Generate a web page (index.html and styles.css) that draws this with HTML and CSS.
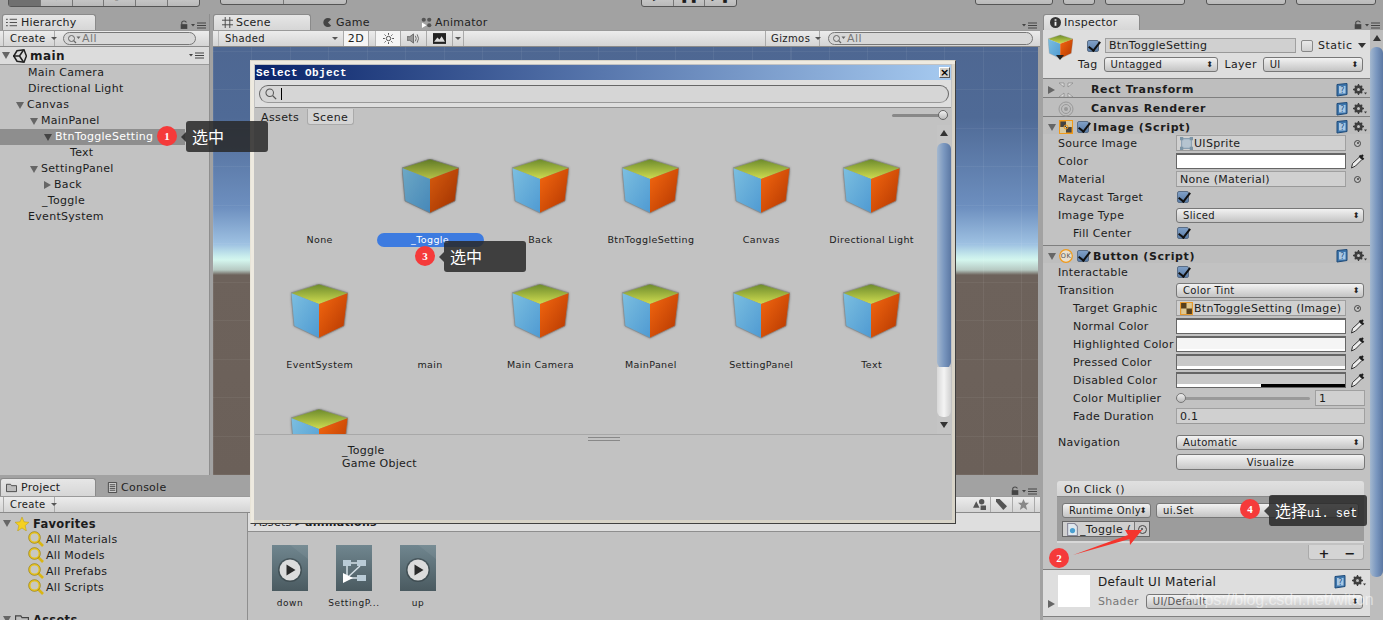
FILE: index.html
```html
<!DOCTYPE html>
<html lang="en">
<head>
<meta charset="utf-8">
<title>Unity Editor</title>
<link rel="stylesheet" href="styles.css">
</head>
<body>
<svg class="sprite" aria-hidden="true">
  <defs>
    <linearGradient id="gTop" x1="0" y1="0" x2="0" y2="1"><stop offset="0" stop-color="#6c8a2c"/><stop offset="1" stop-color="#cfdc50"/></linearGradient>
    <linearGradient id="gLeft" x1="0" y1="0" x2="1" y2="1"><stop offset="0" stop-color="#7cbfe0"/><stop offset="1" stop-color="#4f9ad2"/></linearGradient>
    <linearGradient id="gRight" x1="0" y1="0" x2="1" y2="1"><stop offset="0" stop-color="#f56810"/><stop offset="1" stop-color="#b23600"/></linearGradient>
    <linearGradient id="gClip" x1="0" y1="0" x2="0" y2="1"><stop offset="0" stop-color="#70868f"/><stop offset="1" stop-color="#4a5a60"/></linearGradient>
    <symbol id="cube" viewBox="0 0 57 55">
      <path d="M28 0 57 9 28 20 0 9Z" fill="url(#gTop)"/>
      <path d="M0 9 28 20V54L3 42Z" fill="url(#gLeft)"/>
      <path d="M57 9 28 20V54L53 42Z" fill="url(#gRight)"/>
      <path d="M28 0 57 9 53 42 28 54 3 42 0 9Z" fill="none" stroke="#8a8a8a" stroke-width=".7"/>
    </symbol>
    <symbol id="help" viewBox="0 0 13 14">
      <path d="M1 1.5 11 .5V11.5L1 13Z" fill="#3f77ad" stroke="#1e4a78"/>
      <path d="M3 3H9.5V10.5H3Z" fill="#a9c8e4"/>
      <text x="4.2" y="9.6" font-size="8" font-family="DejaVu Sans" fill="#2a5a8c">?</text>
    </symbol>
    <symbol id="gear" viewBox="0 0 14 12">
      <circle cx="5.5" cy="5.5" r="3.2" fill="none" stroke="#3c3c3c" stroke-width="2.2"/>
      <path d="M5.5 0V11M0 5.5H11M1.8 1.8 9.2 9.2M9.2 1.8 1.8 9.2" stroke="#3c3c3c" stroke-width="1.3"/>
      <circle cx="5.5" cy="5.5" r="1.5" fill="#c2c2c2"/>
      <path d="M11 8.5H14L12.5 10.5Z" fill="#3c3c3c"/>
    </symbol>
    <symbol id="pick" viewBox="0 0 15 15">
      <path d="M2.5 9.5 9.5 3 12 5.5 5.5 12 1.5 14Z" fill="#ededed" stroke="#333"/>
      <path d="M9.5 1.5 13.5 5.5M11 3 13 1" stroke="#1c1c1c" stroke-width="2.2"/>
    </symbol>
    <symbol id="mag" viewBox="0 0 16 16">
      <circle cx="6.5" cy="6.5" r="5" fill="#d8d8c0" fill-opacity=".3" stroke="#e5c120" stroke-width="2"/>
      <path d="M10 10 15 15" stroke="#d9b514" stroke-width="2.6"/>
      <circle cx="6.5" cy="6.5" r="5.9" fill="none" stroke="#7c6a10" stroke-width=".5"/>
    </symbol>
    <symbol id="lock" viewBox="0 0 9 10">
      <path d="M2 5V2.8C2 .4 7 .4 7 2.8" fill="none" stroke="#444" stroke-width="1.2"/>
      <path d="M.8 4.6H8.2V10H.8Z" fill="#444"/>
    </symbol>
    <symbol id="menu" viewBox="0 0 15 7">
      <path d="M0 2H4L2 4.5Z" fill="#444"/>
      <path d="M6 1H15M6 3.5H15M6 6H15" stroke="#444"/>
    </symbol>
    <symbol id="searchico" viewBox="0 0 14 10">
      <circle cx="4.5" cy="4.5" r="3" fill="none" stroke="#666"/>
      <path d="M6.7 6.7 9 9" stroke="#666" stroke-width="1.2"/>
      <path d="M9.5 2.5H13.5L11.5 5Z" fill="#666"/>
    </symbol>
    <symbol id="clip" viewBox="0 0 36 46">
      <rect width="36" height="46" fill="url(#gClip)"/>
      <path d="M36 0V14L18 0Z" fill="#fff" opacity=".06"/>
      <circle cx="18" cy="25" r="12" fill="#2f3a3e" opacity=".55"/>
      <circle cx="18" cy="25" r="10.5" fill="#dcdcdc"/>
      <path d="M14.5 19.5 23.5 25 14.5 30.5Z" fill="#2a2a2a"/>
    </symbol>
    <symbol id="ctrl" viewBox="0 0 36 46">
      <rect width="36" height="46" fill="url(#gClip)"/>
      <path d="M7 15H15V21H7ZM21 15H30V21H21ZM21 30H30V36H21Z" fill="#b9cbd6"/>
      <path d="M15 18H21M11 21V32M24 21 11 33M14 33H21" stroke="#d4dfe6" stroke-width="1.5" fill="none"/>
      <path d="M7 28 17 33 7 38Z" fill="#fff"/>
    </symbol>
    <symbol id="folder" viewBox="0 0 12 10">
      <path d="M.5 1.5H5L6 3H11.5V9.5H.5Z" fill="#bdbdbd" stroke="#444"/>
    </symbol>
  </defs>
</svg>

<div class="editor">
  <div class="topbar">
    <div class="tbgroup tools">
      <span class="tbtn active">⟲</span><span class="tbtn">✥</span><span class="tbtn">⟳</span><span class="tbtn">⤢</span><span class="tbtn">▭</span><span class="tbtn">⊠</span>
    </div>
    <div class="tbgroup pivot"><span class="tbtn">Pivot</span><span class="tbtn">Local</span></div>
    <div class="tbgroup play"><span class="tbtn">▶</span><span class="tbtn">❚❚</span><span class="tbtn">▶❚</span></div>
    <div class="tbgroup collab"><span class="tbtn">Collab</span></div>
    <div class="tbgroup cloud"><span class="tbtn">☁</span></div>
    <div class="tbgroup account"><span class="tbtn">Account</span></div>
    <div class="tbgroup layers"><span class="tbtn">Layers</span></div>
    <div class="tbgroup layout"><span class="tbtn">Layout</span></div>
  </div>

  <div class="workspace">
    <div class="leftside">
      <div class="upper">
        <section class="panel hierarchy">
          <div class="tabrow">
            <div class="tab on">
              <svg class="tabico" viewBox="0 0 12 10"><path d="M0 1.5H2M0 5H2M0 8.5H2M4 1.5H12M4 5H12M4 8.5H12" stroke="#444"/></svg>Hierarchy
            </div>
            <div class="tabtools"><svg class="ico-lock"><use href="#lock"/></svg><svg class="ico-menu"><use href="#menu"/></svg></div>
          </div>
          <div class="bar">
            <span class="bar-btn create">Create <i class="caret"></i></span>
            <div class="search-pill small"><svg class="ico-search"><use href="#searchico"/></svg>All</div>
          </div>
          <div class="scene-root">
            <i class="fold down"></i>
            <svg class="unity" viewBox="0 0 14 14"><path d="M0.8 7 4 1.8 11 .8 13.4 7 11 13.2 4 12.2Z" fill="none" stroke="#222" stroke-width="1.5"/><path d="M0 7H6.5L10.5 1M6.5 7 10.5 13" fill="none" stroke="#222" stroke-width="1.5"/></svg>
            <b>main</b>
            <svg class="ico-menu right"><use href="#menu"/></svg>
          </div>
          <div class="tree">
            <div class="row d0">Main Camera</div>
            <div class="row d0">Directional Light</div>
            <div class="row d0"><i class="fold down"></i>Canvas</div>
            <div class="row d1"><i class="fold down"></i>MainPanel</div>
            <div class="row d2 selected"><i class="fold down"></i>BtnToggleSetting</div>
            <div class="row d3">Text</div>
            <div class="row d1"><i class="fold down"></i>SettingPanel</div>
            <div class="row d2"><i class="fold rt"></i>Back</div>
            <div class="row d1">_Toggle</div>
            <div class="row d0">EventSystem</div>
          </div>
        </section>

        <section class="panel sceneview">
          <div class="tabrow">
            <div class="tab on scene-tab">
              <svg class="tabico" viewBox="0 0 12 12"><path d="M3.5 0V12M8.5 0V12M0 3.5H12M0 8.5H12" stroke="#444"/></svg>Scene
            </div>
            <div class="tab game-tab">
              <svg class="tabico" viewBox="0 0 12 12"><path d="M10 2.5A5 5 0 1 0 10 9.5L6.5 6Z" fill="#444"/></svg>Game
            </div>
            <div class="tab">
              <svg class="tabico" viewBox="0 0 12 12"><circle cx="3" cy="3" r="2.3" fill="#555"/><circle cx="9" cy="3" r="2.3" fill="#555"/><circle cx="9" cy="9" r="2.3" fill="#555"/><path d="M1 6 6 9 1 12Z" fill="#fff"/></svg>Animator
            </div>
            <div class="tabtools"><svg class="ico-menu"><use href="#menu"/></svg></div>
          </div>
          <div class="bar">
            <span class="bar-btn shaded">Shaded <i class="caret"></i></span>
            <span class="bar-btn lit">2D</span>
            <span class="bar-btn lit icon sun"><svg viewBox="0 0 12 12" class="tbico"><circle cx="6" cy="6" r="2.4" fill="none" stroke="#444"/><path d="M6 0V2M6 10V12M0 6H2M10 6H12M1.7 1.7 3 3M9 9 10.3 10.3M1.7 10.3 3 9M9 3 10.3 1.7" stroke="#444"/></svg></span>
            <span class="bar-btn icon"><svg viewBox="0 0 14 12" class="tbico"><path d="M0 4H3L7 1V11L3 8H0Z" fill="#999" stroke="#666"/><path d="M9 3Q11 6 9 9M11 1.5Q14 6 11 10.5" fill="none" stroke="#666"/></svg></span>
            <span class="bar-btn icon pic"><svg viewBox="0 0 12 10" class="tbico"><path d="M0 0H12V10H0Z" fill="#222"/><path d="M1 8 4 4 6 6 8 3 11 8Z" fill="#ddd"/></svg></span>
            <span class="bar-btn dropico"><i class="caret"></i></span>
            <span class="spacer"></span>
            <span class="bar-btn gizmos">Gizmos <i class="caret"></i></span>
            <div class="search-pill wide"><svg class="ico-search"><use href="#searchico"/></svg>All</div>
          </div>
          <div class="viewport"></div>
        </section>
      </div>

      <section class="panel project">
        <div class="tabrow">
          <div class="tab on project-tab"><svg class="tabico"><use href="#folder"/></svg>Project</div>
          <div class="tab console-tab"><svg class="tabico" viewBox="0 0 10 12"><path d="M.5.5H9.5V11.5H.5ZM2 3H8M2 5H8M2 7H8M2 9H8" fill="#ccc" stroke="#444"/></svg>Console</div>
          <div class="tabtools"><svg class="ico-lock"><use href="#lock"/></svg><svg class="ico-menu"><use href="#menu"/></svg></div>
        </div>
        <div class="bar">
          <span class="bar-btn create">Create <i class="caret"></i></span>
          <span class="spacer"></span>
          <span class="bar-btn icon filt"><svg viewBox="0 0 12 10" class="tbico"><path d="M3 2 6 8H0Z M8 0A2.5 2.5 0 1 1 8 5A2.5 2.5 0 1 1 8 0Z M7 6H12V10H7Z" fill="#555"/></svg></span>
          <span class="bar-btn icon filt"><svg viewBox="0 0 12 12" class="tbico"><path d="M0 3V0H4L12 8 8 12Z" fill="#555"/></svg></span>
          <span class="bar-btn icon filt"><svg viewBox="0 0 12 12" class="tbico"><path d="M6 0 7.8 4H12L8.7 7 10 12 6 9.2 2 12 3.3 7 0 4H4.2Z" fill="#888"/></svg></span>
          <span class="bar-tail"></span>
        </div>
        <div class="project-body">
          <div class="proj-tree">
            <div class="fav"><i class="fold down"></i><svg class="star" viewBox="0 0 14 14"><path d="M7 0 9 4.8 14 5.3 10.2 8.6 11.4 14 7 11 2.6 14 3.8 8.6 0 5.3 5 4.8Z" fill="#f5d020" stroke="#b89a10" stroke-width=".5"/></svg><b>Favorites</b></div>
            <div class="fav-item"><svg class="ico-mag"><use href="#mag"/></svg>All Materials</div>
            <div class="fav-item"><svg class="ico-mag"><use href="#mag"/></svg>All Models</div>
            <div class="fav-item"><svg class="ico-mag"><use href="#mag"/></svg>All Prefabs</div>
            <div class="fav-item"><svg class="ico-mag"><use href="#mag"/></svg>All Scripts</div>
            <div class="fav assets"><i class="fold down"></i><svg class="star" viewBox="0 0 12 10"><use href="#folder"/></svg><b>Assets</b></div>
          </div>
          <div class="proj-main">
            <div class="crumb">Assets ▸ <b>animations</b></div>
            <div class="clips">
              <div class="clip"><svg class="clipico"><use href="#clip"/></svg><span>down</span></div>
              <div class="clip"><svg class="clipico"><use href="#ctrl"/></svg><span>SettingP...</span></div>
              <div class="clip"><svg class="clipico"><use href="#clip"/></svg><span>up</span></div>
            </div>
          </div>
        </div>
      </section>
    </div>

    <aside class="inspector">
      <div class="tabrow">
        <div class="tab on insp-tab">
          <svg class="tabico" viewBox="0 0 12 12"><circle cx="6" cy="6" r="6" fill="#333"/><path d="M5 2.5H7V4.2H5ZM5 5.3H7V9.5H5Z" fill="#eee"/></svg>Inspector
        </div>
        <div class="tabtools"><svg class="ico-lock"><use href="#lock"/></svg><svg class="ico-menu"><use href="#menu"/></svg></div>
      </div>
      <div class="insp-body">
        <div class="insp-content">
          <div class="go-head">
            <svg class="go-cube"><use href="#cube"/></svg>
            <i class="go-marker"></i>
            <div class="go-fields">
              <div class="go-line">
                <i class="check"></i>
                <span class="field name">BtnToggleSetting</span>
                <i class="check off"></i><span class="static">Static</span><i class="go-caret"></i>
              </div>
              <div class="go-line second">
                <span class="go-lab tag">Tag</span>
                <span class="drop tagdrop">Untagged</span>
                <span class="go-lab layer">Layer</span>
                <span class="drop layerdrop">UI</span>
              </div>
            </div>
          </div>

          <div class="comp-title bordered">
            <i class="fold rt"></i>
            <svg class="cico" viewBox="0 0 16 16"><path d="M1 1 6 1 6 5ZM15 1 10 1 10 5ZM1 15 6 15 6 11ZM15 15 10 15 10 11Z" fill="#ddd" stroke="#888" stroke-width=".7"/></svg>
            <b>Rect Transform</b><span class="spacer"></span><svg class="ico-help"><use href="#help"/></svg><svg class="ico-gear"><use href="#gear"/></svg>
          </div>
          <div class="comp-title bordered">
            <i class="fold none"></i>
            <svg class="cico" viewBox="0 0 16 16"><circle cx="8" cy="8" r="7" fill="none" stroke="#999"/><circle cx="8" cy="8" r="4.5" fill="none" stroke="#999"/><circle cx="8" cy="8" r="2" fill="#999"/></svg>
            <b>Canvas Renderer</b><span class="spacer"></span><svg class="ico-help"><use href="#help"/></svg><svg class="ico-gear"><use href="#gear"/></svg>
          </div>

          <div class="comp image-comp">
            <div class="comp-title">
              <i class="fold down"></i>
              <svg class="cico tight" viewBox="0 0 14 14"><path d="M.7.7H13.3V13.3H.7Z" fill="#444" stroke="#f09a1a" stroke-width="1.4"/><path d="M1 7H7V13H1ZM7 1H13V7H7Z" fill="#d8c9a0"/><circle cx="7" cy="7" r="2" fill="none" stroke="#f09a1a"/></svg>
              <i class="check"></i>
              <b>Image (Script)</b><span class="spacer"></span><svg class="ico-help"><use href="#help"/></svg><svg class="ico-gear"><use href="#gear"/></svg>
            </div>
            <div class="prop"><label>Source Image</label><span class="field"><svg class="fico" viewBox="0 0 12 12"><path d="M1.5 1.5H10.5V10.5H1.5Z" fill="#b5c4d0" stroke="#8aa0b2"/><path d="M0 0H3V3H0ZM9 0H12V3H9ZM0 9H3V12H0ZM9 9H12V12H9Z" fill="#7c94a5"/></svg>UISprite</span><i class="target"></i></div>
            <div class="prop"><label>Color</label><span class="swatch white"></span><svg class="ico-pick"><use href="#pick"/></svg></div>
            <div class="prop"><label>Material</label><span class="field">None (Material)</span><i class="target"></i></div>
            <div class="prop"><label>Raycast Target</label><i class="check"></i></div>
            <div class="prop"><label>Image Type</label><span class="drop wide">Sliced</span></div>
            <div class="prop in"><label>Fill Center</label><i class="check"></i></div>
          </div>

          <div class="comp button-comp">
            <div class="comp-title">
              <i class="fold down"></i>
              <svg class="cico tight" viewBox="0 0 14 14"><circle cx="7" cy="7" r="6.3" fill="#e8e0d0" stroke="#f09a1a" stroke-width="1.2"/><text x="7" y="9.4" text-anchor="middle" font-size="6.5" font-family="DejaVu Sans" fill="#555">OK</text></svg>
              <i class="check"></i>
              <b>Button (Script)</b><span class="spacer"></span><svg class="ico-help"><use href="#help"/></svg><svg class="ico-gear"><use href="#gear"/></svg>
            </div>
            <div class="prop"><label>Interactable</label><i class="check"></i></div>
            <div class="prop"><label>Transition</label><span class="drop wide">Color Tint</span></div>
            <div class="prop in"><label>Target Graphic</label><span class="field"><svg class="fico" viewBox="0 0 12 12"><path d="M.5.5H11.5V11.5H.5Z" fill="#57401c" stroke="#e79a2d"/><path d="M1 6H6V11H1ZM6 1H11V6H6Z" fill="#e0c890"/></svg>BtnToggleSetting (Image)</span><i class="target"></i></div>
            <div class="prop in"><label>Normal Color</label><span class="swatch white"></span><svg class="ico-pick"><use href="#pick"/></svg></div>
            <div class="prop in"><label>Highlighted Color</label><span class="swatch light"></span><svg class="ico-pick"><use href="#pick"/></svg></div>
            <div class="prop in"><label>Pressed Color</label><span class="swatch pressed"></span><svg class="ico-pick"><use href="#pick"/></svg></div>
            <div class="prop in"><label>Disabled Color</label><span class="swatch disabled"></span><svg class="ico-pick"><use href="#pick"/></svg></div>
            <div class="prop in"><label>Color Multiplier</label><span class="slider"><i class="knob"></i></span><span class="field num">1</span></div>
            <div class="prop in"><label>Fade Duration</label><span class="field full">0.1</span></div>
            <div class="prop nav"><label>Navigation</label><span class="drop wide">Automatic</span></div>
            <div class="prop vis"><label></label><span class="btn-vis">Visualize</span></div>

            <div class="onclick">
              <div class="oc-head">On Click ()</div>
              <div class="oc-body">
                <div class="oc-line">
                  <span class="drop rt-only">Runtime Only</span>
                  <span class="drop fn">ui.Set</span>
                </div>
                <div class="oc-line">
                  <span class="objref"><svg class="fico" viewBox="0 0 10 12"><path d="M.5.5H7L9.5 3V11.5H.5Z" fill="#dfe8ee" stroke="#889"/><circle cx="5" cy="7" r="2.4" fill="#4a9fd0"/></svg><span class="objname">_Toggle (</span><span class="objtarget"><i class="target dark"></i></span></span>
                </div>
              </div>
              <div class="oc-foot"><span class="plusminus"><b>+</b><b>−</b></span></div>
            </div>
          </div>

          <div class="material">
            <div class="mat-thumb"></div>
            <i class="fold rt mat-fold"></i>
            <div class="mat-text">
              <div class="mat-name">Default UI Material</div>
              <div class="mat-shader"><span>Shader</span><span class="drop shader">UI/Default</span></div>
            </div>
            <div class="mat-icons"><svg class="ico-help"><use href="#help"/></svg><svg class="ico-gear"><use href="#gear"/></svg></div>
          </div>
        </div>
        <div class="scrollbar insp-scroll">
          <i class="sb-up"></i><div class="sb-thumb"></div><div class="sb-rest"></div>
        </div>
      </div>
    </aside>
  </div>
</div>

<!-- Floating Select Object window -->
<div class="dialog">
  <div class="dlg-title"><span>Select Object</span><span class="dlg-close">×</span></div>
  <div class="dlg-search">
    <div class="dlg-input"><svg class="dlg-mag" viewBox="0 0 14 14"><circle cx="5.5" cy="5.5" r="4.4" fill="none" stroke="#555" stroke-width="1.2"/><path d="M9 9 13 13" stroke="#555" stroke-width="1.5"/></svg><i class="caretline"></i></div>
  </div>
  <div class="dlg-tabs">
    <span class="dtab plain">Assets</span><span class="dtab raised">Scene</span>
    <span class="spacer"></span>
    <span class="dlg-slider"><i class="dlg-knob"></i></span>
  </div>
  <div class="dlg-main">
    <div class="dlg-grid">
      <div class="cell"><div class="nocube"></div><span>None</span></div>
      <div class="cell sel"><svg class="cube dim"><use href="#cube"/></svg><span class="pill">_Toggle</span></div>
      <div class="cell"><svg class="cube"><use href="#cube"/></svg><span>Back</span></div>
      <div class="cell"><svg class="cube"><use href="#cube"/></svg><span>BtnToggleSetting</span></div>
      <div class="cell"><svg class="cube"><use href="#cube"/></svg><span>Canvas</span></div>
      <div class="cell"><svg class="cube"><use href="#cube"/></svg><span>Directional Light</span></div>
      <div class="cell"><svg class="cube"><use href="#cube"/></svg><span>EventSystem</span></div>
      <div class="cell"><div class="nocube"></div><span>main</span></div>
      <div class="cell"><svg class="cube"><use href="#cube"/></svg><span>Main Camera</span></div>
      <div class="cell"><svg class="cube"><use href="#cube"/></svg><span>MainPanel</span></div>
      <div class="cell"><svg class="cube"><use href="#cube"/></svg><span>SettingPanel</span></div>
      <div class="cell"><svg class="cube"><use href="#cube"/></svg><span>Text</span></div>
      <div class="cell"><svg class="cube"><use href="#cube"/></svg><span>_Toggle</span></div>
    </div>
    <div class="scrollbar dlg-scroll">
      <i class="sb-up"></i><div class="sb-thumb"></div><div class="sb-rest"></div><i class="sb-down"></i>
    </div>
  </div>
  <div class="dlg-preview">
    <i class="grip"></i>
    <div class="pv-text">_Toggle<br>Game Object</div>
  </div>
</div>

<!-- Screenshot annotations -->
<div class="badge b1">1</div><div class="tip t1">选中</div>
<div class="badge b3">3</div><div class="tip t3">选中</div>
<div class="badge b4">4</div><div class="tip t4">选择<span class="mono">ui. set</span></div>
<div class="badge b2">2</div>
<svg class="arrow" viewBox="0 0 80 34"><path d="M1 29 56 9 53 4 70 4 58 19 57.5 13Z" fill="#f4352d"/></svg>
<div class="watermark">https://blog.csdn.net/witton</div>
</body>
</html>
```
FILE: styles.css
```css
* { box-sizing: border-box; }
html, body { margin: 0; height: 620px; overflow: hidden; }
body {
  position: relative;
  width: 1383px;
  background: #a2a2a2;
  font: 11px "DejaVu Sans", sans-serif;
  letter-spacing: .3px;
  color: #1c1c1c;
}
.sprite { position: absolute; width: 0; height: 0; }
.spacer { flex: 1; }
.editor { display: flex; flex-direction: column; height: 620px; }

/* top toolbar, cut off by the screenshot */
.topbar { height: 14px; display: flex; overflow: hidden; position: relative; flex: none; }
.tbgroup {
  height: 20px; margin-top: -13px; display: flex; flex: none;
  border: 1px solid #555; border-radius: 3px;
  background: linear-gradient(#dcdcdc, #b9b9b9);
}
.tbtn { flex: 1; text-align: center; border-right: 1px solid #777; line-height: 18px; }
.tbtn:last-child { border-right: 0; }
.tbtn.active { background: #707070; }
.tools { margin-left: 8px; width: 192px; }
.pivot { margin-left: 20px; width: 127px; margin-top: -15px; }
.play { margin-left: 294px; width: 96px; }
.collab { margin-left: 238px; width: 78px; margin-top: -15px; }
.cloud { margin-left: 10px; width: 32px; margin-top: -15px; }
.account { margin-left: 10px; width: 80px; margin-top: -15px; }
.layers { margin-left: 21px; width: 80px; margin-top: -15px; }
.layout { margin-left: 10px; width: 80px; margin-top: -15px; }

.workspace { flex: 1; display: flex; min-height: 0; }
.leftside { width: 1040px; display: flex; flex-direction: column; flex: none; }
.upper { height: 461px; display: flex; gap: 3px; flex: none; }

.panel { display: flex; flex-direction: column; min-width: 0; background: #c2c2c2; }
.tabrow { height: 16px; display: flex; align-items: stretch; background: #a2a2a2; flex: none; }
.tab {
  display: flex; align-items: center; gap: 3px;
  padding: 0 0 0 6px; font-size: 11px; color: #222; letter-spacing: .25px;
}
.tab.on {
  background: linear-gradient(#e6e6e6, #d6d6d6);
  border: 1px solid #8a8a8a; border-bottom: 0; border-radius: 3px 3px 0 0;
}
.tabico { width: 11px; height: 11px; flex: none; }
.tabtools { margin-left: auto; display: flex; align-items: flex-end; gap: 3px; padding: 0 3px 1px 0; }
.ico-lock { width: 8px; height: 9px; }
.ico-menu { width: 15px; height: 7px; }
.ico-menu.right { margin-left: auto; margin-right: 5px; }
.ico-search { width: 14px; height: 10px; margin-right: 1px; }

.bar {
  height: 17px; display: flex; align-items: stretch; flex: none;
  background: linear-gradient(#ececec, #d4d4d4);
  border-bottom: 1px solid #8a8a8a;
  border-top: 1px solid #9a9a9a;
  font-size: 10px; letter-spacing: .4px;
}
.bar-btn {
  display: flex; align-items: center; border-right: 1px solid #aaa; padding: 0 5px;
}
.caret {
  display: inline-block; margin-left: 5px; border: 3px solid transparent; border-top: 3px solid #555; border-bottom: 0;
}
.create { margin-left: 3px; border-left: 1px solid #aaa; width: 52px; padding-left: 6px; justify-content: space-between; }
.search-pill {
  display: flex; align-items: center; margin: 1px 2px 0 8px; height: 13px; border-radius: 7px;
  border: 1px solid #777; background: #d8d8d8; padding-left: 3px; color: #777; font-size: 11px;
}
.search-pill.small { width: 133px; }
.search-pill.wide { width: 205px; margin-left: 8px; margin-right: 7px; }

/* hierarchy */
.hierarchy { width: 210px; flex: none; border-right: 1px solid #8e8e8e; }
.hierarchy .tab { width: 94px; margin-left: 2px; padding-left: 3px; gap: 4px; }
.scene-root {
  height: 18px; display: flex; align-items: center; padding-left: 2px;
  background: #dcdcdc; border-bottom: 1px solid #9a9a9a; font-size: 12px; letter-spacing: .4px; gap: 3px; flex: none;
}
.unity { width: 14px; height: 14px; }
.fold { display: inline-block; flex: none; width: 0; height: 0; }
.fold.down { border-left: 4.5px solid transparent; border-right: 4.5px solid transparent; border-top: 7px solid #666; }
.fold.rt { border-top: 4.5px solid transparent; border-bottom: 4.5px solid transparent; border-left: 7px solid #666; }
.fold.none { width: 7px; }
.tree { flex: 1; }
.row { height: 16px; line-height: 16px; display: flex; align-items: center; white-space: nowrap; }
.row .fold { margin-left: -12px; margin-right: 3px; }
.d0 { padding-left: 28px; }
.d1 { padding-left: 42px; }
.d2 { padding-left: 56px; }
.d3 { padding-left: 70px; }
.selected { background: #8e8e8e; color: #fff; margin-right: 24px; }
.selected .fold.down { border-top-color: #444; }

/* scene view */
.sceneview { width: 827px; flex: none; background: #a2a2a2; }
.scene-tab { width: 98px; }
.game-tab { margin-left: 3px; width: 99px; }
.sceneview .tab { padding-left: 8px; }
.shaded { width: 126px; justify-content: space-between; border-left: 1px solid #bbb; margin-left: 5px; padding-left: 6px; }
.lit { background: #f5f5f5; width: 25px; justify-content: center; font-size: 11px; padding: 0; }
.icon { width: 26px; justify-content: center; padding: 0; }
.sun { margin-left: 6px; border-left: 1px solid #bbb; }
.dropico { width: 11px; justify-content: center; padding: 0; }
.dropico .caret { margin: 0; }
.tbico { width: 13px; height: 11px; }
.gizmos { width: 55px; border-left: 1px solid #aaa; justify-content: space-between; padding-left: 5px; }
.viewport {
  flex: 1;
  margin: 0 2px 0 0;
  background:
    repeating-linear-gradient(90deg, rgba(255,255,255,.06) 0 1px, transparent 1px 38.5px),
    repeating-linear-gradient(0deg, rgba(255,255,255,.05) 0 1px, transparent 1px 38.5px),
    linear-gradient(#4e6792 0, #4f6a96 70px, #6d8fbf 160px, #9ec1e2 197px, #c8ecec 209px, #d4f6ee 213px, #b6c9c2 223px, #6d625b 228px, #6b6059 100%);
}

/* project */
.project { margin-top: 3px; flex: 1; min-height: 0; }
.project .tabrow { height: 18px; }
.project-tab { width: 96px; gap: 4px; }
.project .tab { padding-left: 5px; }
.console-tab { margin-left: 6px; }
.project .bar { height: 17px; }
.filt { width: 22px; border-left: 0; }
.bar-tail { width: 5px; }
.project-body { flex: 1; display: flex; min-height: 0; overflow: hidden; }
.proj-tree { width: 248px; flex: none; border-right: 1px solid #8e8e8e; padding: 3px 0 0 3px; }
.fav { height: 15px; display: flex; align-items: center; gap: 4px; font-size: 11.5px; }
.fav .star { margin-left: 0; }
.star { width: 14px; height: 14px; }
.fav-item { height: 16px; display: flex; align-items: center; padding-left: 25px; gap: 2px; }
.ico-mag { width: 16px; height: 16px; }
.assets { margin-top: 17px; }
.proj-main { flex: 1; display: flex; flex-direction: column; }
.crumb { height: 19px; line-height: 19px; background: #dedede; border-bottom: 1px solid #8e8e8e; padding-left: 6px; }
.clips { display: flex; padding: 13px 0 0 10px; }
.clip { width: 64px; display: flex; flex-direction: column; align-items: center; gap: 7px; font-size: 9px; letter-spacing: .6px; }
.clipico { width: 36px; height: 46px; }

/* inspector */
.inspector { flex: 1; display: flex; flex-direction: column; min-width: 0; }
.insp-tab { width: 97px; margin-left: 3px; }
.insp-body { flex: 1; display: flex; min-height: 0; }
.insp-content { width: 330px; flex: none; background: #c2c2c2; padding-left: 3px; background-clip: content-box; }
.go-head {
  height: 49px; display: flex; background: #dedede; border-bottom: 1px solid #808080;
  padding: 4px 0 0 5px;
}
.go-cube { width: 25px; height: 26px; flex: none; }
.go-marker { width: 0; height: 0; flex: none; margin: 21px 0 0 -17px; border: 4px solid transparent; border-top: 5px solid #222; border-bottom: 0; align-self: flex-start; }
.go-fields { margin-left: 23px; flex: 1; padding-top: 3px; }
.go-line { display: flex; align-items: center; height: 17px; }
.go-line .check { margin-right: 6px; }
.second { margin: 2px 0 0 -9px; }
.field.name { width: 191px; height: 15px; }
.go-line .check.off { margin: 0 5px 0 5px; }
.static { letter-spacing: .5px; }
.go-caret { margin-left: 6px; border: 4.5px solid transparent; border-top: 5px solid #333; border-bottom: 0; }
.go-lab { padding-right: 6px; }
.tagdrop { width: 114px; }
.layer { margin-left: 7px; }
.layerdrop { width: 100px; }

.comp-title {
  height: 17px; display: flex; align-items: center; padding: 3px 2px 0 5px; gap: 4px;
  background: #bebebe; font-size: 11px; letter-spacing: .62px;
}
.comp-title b { font-weight: 700; }
.comp-title.bordered { height: 19px; border-bottom: 1px solid #7f7f7f; }
.comp-title.bordered b { margin-left: 13px; }
.cico { width: 16px; height: 16px; margin-left: -1px; }
.cico.tight { width: 14px; height: 14px; }
.ico-help { width: 13px; height: 14px; }
.ico-gear { width: 14px; height: 12px; margin-right: 1px; }
.comp { border-bottom: 1px solid #7f7f7f; }
.image-comp { padding-bottom: 3px; }
.prop {
  height: 18px; display: flex; align-items: center; padding-left: 15px; white-space: nowrap;
}
.prop label { width: 118px; flex: none; }
.prop.in label { padding-left: 15px; }
.field {
  display: flex; align-items: center; width: 170px; height: 16px; padding-left: 3px; gap: 1px;
  background: #d0d0d0; border: 1px solid #a0a0a0; border-bottom-color: #999; flex: none;
  overflow: hidden;
}
.fico { width: 13px; height: 13px; flex: none; }
.target {
  display: inline-block; width: 7px; height: 7px; border: 1px solid #444; border-radius: 50%;
  margin-left: 8px; position: relative;
}
.target::after { content: ""; position: absolute; left: 1.5px; top: 1.5px; width: 2px; height: 2px; background: #444; border-radius: 50%; }
.target.dark { margin: 0; width: 9px; height: 9px; }
.target.dark::after { left: 2.5px; top: 2.5px; }
.swatch { width: 170px; height: 16px; border: 1px solid #666; border-top-width: 2px; flex: none; }
.white { background: #fff; }
.light { background: linear-gradient(#f5f5f5 11px, #fff 11px); }
.pressed { background: linear-gradient(#c8c8c8 10px, #fff 10px); }
.disabled { background: linear-gradient(90deg, #fff 50%, #000 50%) bottom / 100% 3px no-repeat, #c8c8c8; }
.ico-pick { width: 15px; height: 15px; margin-left: 4px; }
.check {
  display: inline-block; width: 12px; height: 12px; flex: none; position: relative;
  background: linear-gradient(#7f9fc6, #5a7da8); border: 1px solid #5a6d85; border-radius: 2px;
}
.prop .check { margin-left: 1px; }
.check::after {
  content: ""; position: absolute; left: 3px; top: -2px; width: 5px; height: 10px;
  border: solid #111; border-width: 0 2px 2px 0; transform: rotate(38deg);
}
.check.off { background: linear-gradient(#e8e8e8, #cfcfcf); border-color: #888; }
.check.off::after { display: none; }
.drop {
  display: flex; align-items: center; height: 15px; padding: 0 5px 0 6px; font-size: 10px; letter-spacing: .35px;
  background: linear-gradient(#f2f2f2, #c4c4c4); border: 1px solid #777; border-radius: 3px; position: relative; white-space: nowrap; overflow: hidden;
}
.drop::after { content: "⬍"; position: absolute; right: 3px; font-size: 8px; color: #222; }
.drop.wide { width: 188px; }
.slider { width: 134px; height: 3px; background: #999; border-radius: 2px; position: relative; flex: none; margin-right: 5px; }
.knob { position: absolute; left: 0; top: -4px; width: 10px; height: 10px; border-radius: 50%; background: linear-gradient(#eee, #bbb); border: 1px solid #777; }
.field.num { width: 50px; }
.field.full { width: 189px; }
.nav { margin-top: 8px; }
.vis { margin-top: 2px; }
.btn-vis {
  width: 189px; height: 16px; line-height: 15px; text-align: center; font-size: 10px;
  background: linear-gradient(#f4f4f4, #c8c8c8); border: 1px solid #777; border-radius: 3px; letter-spacing: .4px;
}
.button-comp { padding-bottom: 9px; }
.onclick { margin: 10px 6px 0 14px; }
.oc-head {
  height: 16px; line-height: 17px; padding-left: 7px; background: linear-gradient(#e0e0e0, #d4d4d4);
  border-radius: 3px 3px 0 0; border-bottom: 1px solid #8a8a8a;
}
.oc-body { height: 46px; background: #9c9c9c; padding: 4px 5px 0; border-bottom: 2px solid #d8d8d8; }
.oc-line { display: flex; gap: 5px; height: 18px; align-items: center; }
.oc-line + .oc-line { margin-top: 1px; }
.rt-only { width: 89px; }
.fn { width: 203px; }
.objref {
  display: flex; align-items: center; width: 88px; height: 16px; background: #d0d0d0; border: 1px solid #666; padding-left: 3px; gap: 1px; overflow: hidden;
}
.objname { flex: 1; overflow: hidden; white-space: nowrap; }
.objtarget { width: 15px; height: 14px; background: #c8c8c8; border-left: 1px solid #777; display: flex; align-items: center; justify-content: center; flex: none; }
.oc-foot { display: flex; justify-content: flex-end; height: 15px; margin-top: 2px; }
.plusminus {
  width: 56px; height: 15px; display: flex; justify-content: space-around; align-items: center; font-size: 13px; line-height: 13px; padding: 2px 0 0 2px;
  background: #d4d4d4; border: 1px solid #aaa; border-top: 0; border-radius: 0 0 3px 3px;
}
.material {
  height: 47px; position: relative; background: #dedede; border-bottom: 1px solid #808080; display: flex;
  padding: 5px 0 0 15px;
}
.mat-thumb { width: 32px; height: 32px; background: #fff; flex: none; }
.mat-fold { position: absolute; left: 5px; top: 30px; }
.mat-text { margin-left: 8px; }
.mat-name { font-size: 12px; letter-spacing: .3px; height: 17px; }
.mat-shader { display: flex; align-items: center; gap: 7px; color: #777; margin-top: 2px; }
.shader { width: 217px; color: #555; }
.mat-icons { position: absolute; right: 3px; top: 5px; display: flex; gap: 5px; }

/* scrollbars */
.scrollbar { background: #c4c4c4; display: flex; flex-direction: column; align-items: center; flex: none; }
.insp-scroll { width: 13px; background: #bdbdbd; }
.sb-up, .sb-down { width: 0; height: 0; border: 4px solid transparent; flex: none; }
.sb-up { border-top: 0; border-bottom: 6px solid #333; margin: 5px 0 6px; }
.sb-down { border-bottom: 0; border-top: 6px solid #333; margin: 5px 0 5px; }
.sb-thumb { width: 100%; flex: none; border-radius: 6px; background: linear-gradient(90deg, #a4b8cf, #7a97bf 50%, #5c78a3); }
.insp-scroll .sb-thumb { height: 530px; }
.sb-rest { flex: 1; width: 100%; }

/* select object window */
.dialog {
  position: absolute; left: 250px; top: 60px; width: 706px; height: 464px;
  background: #c2c2c2; display: flex; flex-direction: column;
  border: 1px solid #404040; border-top-color: #d8d4c8; border-left-color: #e8e4d8;
  box-shadow: inset 3px 3px 0 #eeeae0, inset -3px -3px 0 #d8d4c8;
  padding: 4px;
}
.dlg-title {
  height: 15px; display: flex; align-items: center; justify-content: space-between; flex: none;
  background: linear-gradient(90deg, #0a246a, #a6caf0);
  color: #fff; font: 700 11px "Liberation Mono", monospace; letter-spacing: .4px; padding-left: 1px;
}
.dlg-close {
  width: 11px; height: 11px; margin-right: 1px; background: #d4d0c8; color: #000; font: 700 11px/10px "DejaVu Sans", sans-serif; text-align: center;
  border: 1px solid #555; border-top-color: #fff; border-left-color: #fff; letter-spacing: 0;
}
.dlg-search { height: 28px; flex: none; background: #dedede; border-bottom: 1px solid #8e8e8e; padding: 5px 2px 0 4px; }
.dlg-input {
  height: 18px; border-radius: 9px; border: 1px solid #666; border-bottom-color: #999; background: #d6d6d6;
  display: flex; align-items: center; padding-left: 5px; gap: 4px;
}
.dlg-mag { width: 12px; height: 12px; }
.caretline { width: 1px; height: 12px; background: #000; }
.dlg-tabs { height: 17px; display: flex; align-items: center; flex: none; }
.dtab { height: 16px; line-height: 17px; }
.plain { padding-left: 6px; width: 52px; letter-spacing: .4px; }
.raised { width: 47px; text-align: center; background: #d4d4d4; border: 1px solid #aaa; border-top: 0; border-radius: 0 0 3px 3px; letter-spacing: .4px; }
.dlg-slider { width: 56px; height: 3px; background: #888; border-radius: 2px; position: relative; margin-right: 3px; top: -1px; }
.dlg-knob { position: absolute; right: 0; top: -4px; width: 10px; height: 10px; border-radius: 50%; background: linear-gradient(#f0f0f0, #bbb); border: 1px solid #666; }
.dlg-main { height: 310px; display: flex; flex: none; border-bottom: 1px solid #a8a8a8; }
.dlg-grid {
  flex: 1; overflow: hidden; display: grid; grid-template-columns: repeat(6, 110.4px); grid-auto-rows: 125px;
  padding-left: 9.5px; align-content: start;
}
.cell { display: flex; flex-direction: column; align-items: center; padding-top: 34px; font-size: 9.5px; letter-spacing: .38px; white-space: nowrap; }
.cube { width: 57px; height: 55px; flex: none; filter: drop-shadow(0 0 1px #888); }
.cube.dim { filter: brightness(.88) drop-shadow(0 0 1px #888); }
.nocube { height: 55px; flex: none; }
.cell span { margin-top: 19px; height: 14px; line-height: 14px; }
.cell .pill { background: #3d7be0; color: #fff; width: 107px; text-align: center; border-radius: 7px; }
.dlg-scroll { width: 14px; }
.dlg-scroll .sb-up { margin: 5px 0 7px; }
.dlg-scroll .sb-thumb { height: 225px; }
.dlg-scroll .sb-rest { flex: none; height: 50px; background: linear-gradient(90deg, #d8d8d8, #f4f4f4, #d0d0d0); border-radius: 0 0 6px 6px; margin-top: -1px; }
.dlg-preview { flex: 1; position: relative; padding: 9px 0 0 87px; line-height: 13px; letter-spacing: .25px; }
.grip { position: absolute; left: 333px; top: 2px; width: 32px; height: 4px; border: solid #888; border-width: 1px 0; }

/* annotations */
.badge {
  position: absolute; width: 20px; height: 20px; border-radius: 50%; background: #f53a3a; color: #fff;
  font: 700 11px/20px "Liberation Serif", serif; text-align: center; letter-spacing: 0;
}
.tip {
  position: absolute; height: 31px; border-radius: 3px; background: rgba(40,40,40,.85); color: #fff;
  padding-left: 6px; font: 16px/31px "Noto Sans CJK SC", sans-serif; letter-spacing: 0;
}
.tip::before {
  content: ""; position: absolute; left: -5px; top: 11px; border: 5px solid transparent; border-left: 0; border-right: 5px solid rgba(40,40,40,.85);
}
.mono { font: 12px "Liberation Mono", monospace; }
.b1 { left: 157px; top: 126px; }
.t1 { left: 186px; top: 121px; width: 82px; }
.b3 { left: 415px; top: 246px; }
.t3 { left: 444px; top: 241px; width: 82px; }
.b4 { left: 1240px; top: 499px; }
.t4 { left: 1269px; top: 495px; width: 98px; }
.b2 { left: 1049px; top: 548px; }
.arrow { position: absolute; left: 1072px; top: 526px; width: 80px; height: 34px; }
.watermark {
  position: absolute; left: 1187px; top: 591px; font: 16px "Liberation Sans", sans-serif; letter-spacing: -.1px;
  color: rgba(255,255,255,.5);
}
```
